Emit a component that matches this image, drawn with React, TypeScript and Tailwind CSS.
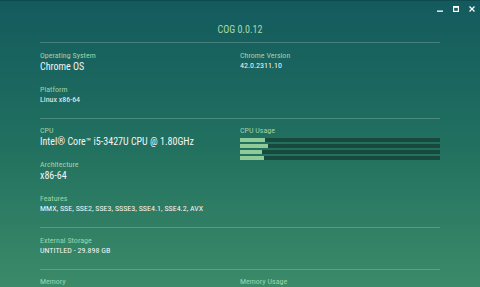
import React from "react";

const font = { fontFamily: '"Liberation Sans Narrow", "Roboto Condensed", Roboto, sans-serif' };

function Label({ children }: { children: React.ReactNode }) {
  return <div className="text-[8px] leading-[10px] h-[10px] text-[#9fd3a8] whitespace-nowrap">{children}</div>;
}
function Big({ children }: { children: React.ReactNode }) {
  return <div className="text-[10px] leading-[12px] h-[12px] text-[#f4f4f4] whitespace-nowrap">{children}</div>;
}
function Small({ children }: { children: React.ReactNode }) {
  return <div className="text-[8px] leading-[10px] h-[10px] text-[#f4f4f4] whitespace-nowrap">{children}</div>;
}
function Sep() {
  return <div className="h-px bg-white/20" />;
}

const usage = [25, 28, 22, 24];

export default function App() {
  return (
    <div
      style={font}
      className="relative w-[480px] h-[287px] overflow-hidden bg-gradient-to-b from-[#135a5e] via-[#21705f] to-[#3b8b69]"
    >
      <div className="absolute top-0 left-0 right-0 h-px bg-[#0f4b4e]" />
      <div className="absolute top-[5px] right-[5px] flex items-center gap-[10px] text-white">
        <svg width="6" height="7" viewBox="0 0 6 7">
          <rect x="0" y="5.5" width="6" height="1.3" fill="#fff" />
        </svg>
        <svg width="6" height="6" viewBox="0 0 6 6">
          <rect x="0.6" y="0.6" width="4.8" height="4.8" fill="none" stroke="#fff" strokeWidth="1.2" />
          <rect x="0" y="0" width="6" height="1.8" fill="#fff" />
        </svg>
        <svg width="6" height="6" viewBox="0 0 6 6">
          <path d="M0.5 0.5 L5.5 5.5 M5.5 0.5 L0.5 5.5" stroke="#fff" strokeWidth="1.2" />
        </svg>
      </div>

      <div className="px-[40px]">
        <div className="h-[42px] pt-[24px] text-center text-[10px] leading-[12px] text-[#a6dca8]">COG 0.0.12</div>
        <Sep />

        <div className="grid grid-cols-2 pt-[8px] pb-[13px]">
          <div className="flex flex-col">
            <Label>Operating System</Label>
            <Big>Chrome OS</Big>
            <div className="h-[12px]" />
            <Label>Platform</Label>
            <Small>Linux x86-64</Small>
          </div>
          <div className="flex flex-col">
            <Label>Chrome Version</Label>
            <Small>42.0.2311.10</Small>
          </div>
        </div>
        <Sep />

        <div className="grid grid-cols-2 pt-[7px] pb-[13px]">
          <div className="flex flex-col">
            <Label>CPU</Label>
            <Big>Intel® Core™ i5-3427U CPU @ 1.80GHz</Big>
            <div className="h-[12px]" />
            <Label>Architecture</Label>
            <Big>x86-64</Big>
            <div className="h-[12px]" />
            <Label>Features</Label>
            <Small>MMX, SSE, SSE2, SSE3, SSSE3, SSE4.1, SSE4.2, AVX</Small>
          </div>
          <div className="flex flex-col">
            <Label>CPU Usage</Label>
            <div className="mt-[2px] flex flex-col gap-[2px]">
              {usage.map((w, i) => (
                <div key={i} className="h-[4px] bg-[#174a3d]">
                  <div className="h-full bg-[#8fcb98]" style={{ width: `${w}px` }} />
                </div>
              ))}
            </div>
          </div>
        </div>
        <Sep />

        <div className="pt-[8px] pb-[13px]">
          <Label>External Storage</Label>
          <Small>UNTITLED - 29.898 GB</Small>
        </div>
        <Sep />

        <div className="grid grid-cols-2 pt-[7px]">
          <Label>Memory</Label>
          <Label>Memory Usage</Label>
        </div>
      </div>
    </div>
  );
}
